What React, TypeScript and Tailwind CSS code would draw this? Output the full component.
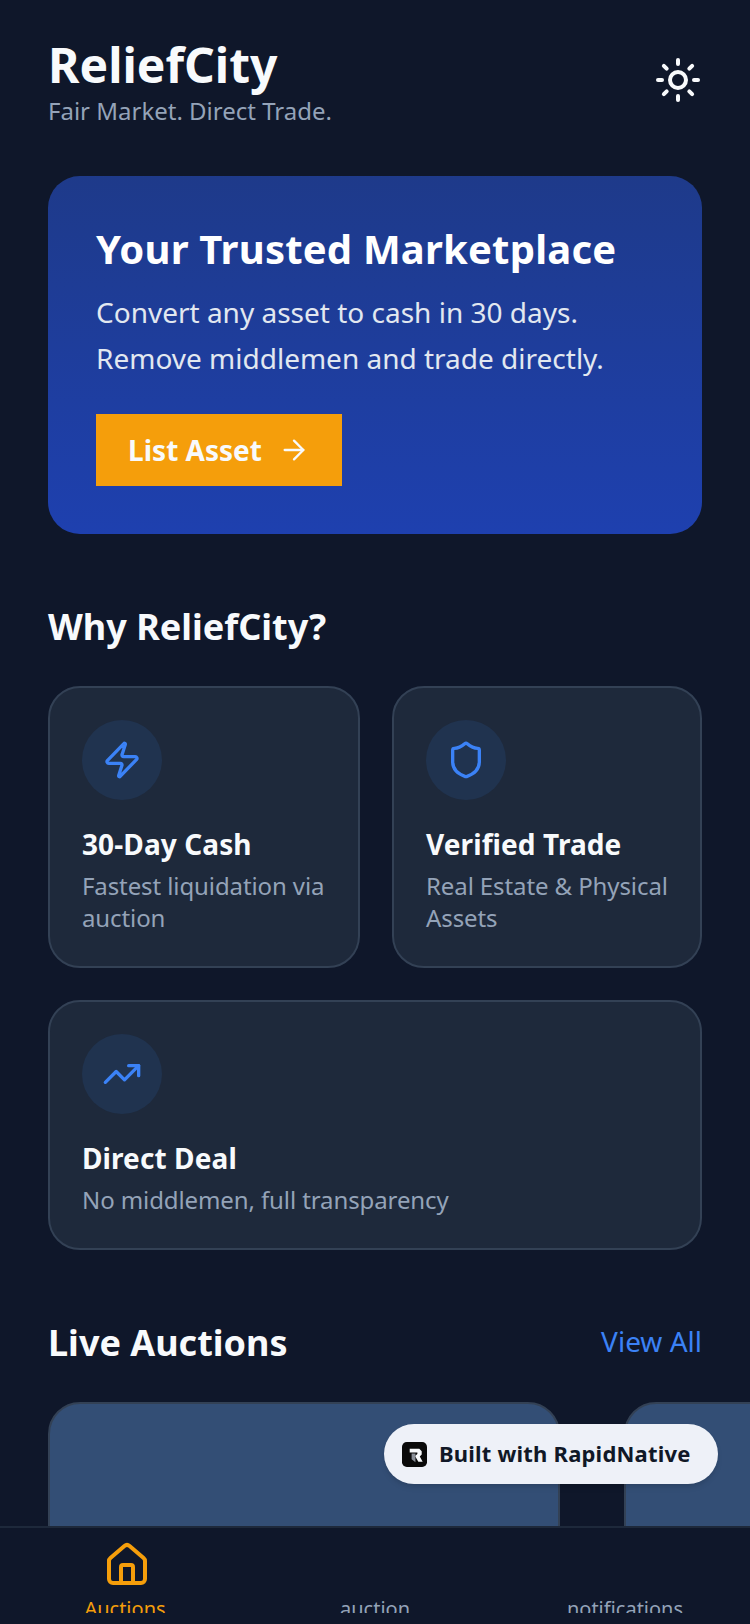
import { ArrowRight, Home, Shield, Sun, TrendingUp, Zap } from 'lucide-react';
import type { ReactNode } from 'react';

function FeatureCard({ icon, title, text, width }: { icon: ReactNode; title: string; text: string; width: string }) {
  return (
    <div className={`rounded-[32px] border-2 border-[#334155] bg-[#1e293b] py-8 pr-6 pl-8 ${width}`}>
      <div className="mb-[25px] flex h-20 w-20 items-center justify-center rounded-full bg-[#20334f]">{icon}</div>
      <h3 className="text-[28px] leading-[38px] font-bold tracking-[0.1px] text-[#f8fafc]">{title}</h3>
      <p className="mt-[7px] text-2xl leading-8 tracking-[-0.1px] text-[#94a3b8]">{text}</p>
    </div>
  );
}

function Tab({ label, active }: { label: string; active?: boolean }) {
  return (
    <div className="flex flex-1 flex-col items-center pt-[13px]">
      <div className="h-12 w-12">{active && <Home size={48} strokeWidth={2} className="ml-0.5 text-[#f59e0b]" />}</div>
      <div className="mt-[5px] h-[19px] overflow-hidden">
        <span className={`block text-xl leading-[30px] ${active ? 'text-[#f59e0b]' : 'text-[#94a3b8]'}`}>{label}</span>
      </div>
    </div>
  );
}

export default function App() {
  return (
    <div className="relative flex h-[1624px] w-[750px] flex-col overflow-hidden bg-[#0f172a] font-['Noto_Sans',sans-serif]">
      <main className="flex-1 overflow-hidden px-12 pt-[41px]">
        {/* Header */}
        <header className="flex items-start justify-between">
          <div>
            <h1 className="text-[48px] leading-[48px] font-bold text-[#f8fafc]">ReliefCity</h1>
            <p className="mt-[6px] text-2xl leading-8 text-[#94a3b8]">Fair Market. Direct Trade.</p>
          </div>
          <Sun size={48} className="mt-[15px] text-[#f8fafc]" />
        </header>

        {/* Hero */}
        <section className="mt-[49px] rounded-[32px] bg-gradient-to-b from-[#1e3a8a] to-[#1e40af] p-12">
          <h2 className="text-[40px] leading-[50px] font-bold tracking-[0.2px] text-white">Your Trusted Marketplace</h2>
          <p className="mt-[15px] text-[28px] leading-[46px] text-[#e2e8f0]">
            Convert any asset to cash in 30 days.
            <br />
            Remove middlemen and trade directly.
          </p>
          <button className="mt-[33px] flex h-[72px] w-[246px] items-center justify-center gap-4 bg-[#f59e0b] text-[28px] font-bold text-[#f8fafc]">
            List Asset
            <ArrowRight size={32} strokeWidth={1.75} />
          </button>
        </section>

        {/* Why */}
        <h2 className="mt-[68px] text-4xl leading-[50px] font-bold text-[#f8fafc]">Why ReliefCity?</h2>
        <div className="mt-[34px] flex flex-wrap gap-8">
          <FeatureCard width="w-[312px]" icon={<Zap size={40} className="text-[#3b82f6]" />} title="30-Day Cash" text="Fastest liquidation via auction" />
          <FeatureCard width="w-[310px]" icon={<Shield size={40} className="text-[#3b82f6]" />} title="Verified Trade" text="Real Estate & Physical Assets" />
          <FeatureCard width="w-full" icon={<TrendingUp size={40} className="text-[#3b82f6]" />} title="Direct Deal" text="No middlemen, full transparency" />
        </div>

        {/* Live Auctions */}
        <div className="mt-[68px] flex items-center justify-between">
          <h2 className="text-4xl leading-[50px] font-bold text-[#f8fafc]">Live Auctions</h2>
          <span className="mb-1 text-[28px] text-[#3b82f6]">View All</span>
        </div>
        <div className="mt-[34px] flex w-[900px] gap-16">
          <div className="h-[300px] w-[512px] shrink-0 rounded-t-[32px] border-2 border-[#334155] bg-[#334e75]" />
          <div className="h-[300px] w-[512px] shrink-0 rounded-t-[32px] border-2 border-[#334155] bg-[#334e75]" />
        </div>
      </main>

      {/* Tab bar */}
      <nav className="z-10 flex h-[98px] shrink-0 border-t-2 border-[#1e293b] bg-[#0f172a]">
        <Tab active label="Auctions" />
        <Tab label="auction" />
        <Tab label="notifications" />
      </nav>

      {/* Badge */}
      <div className="absolute top-[1424px] left-[384px] z-20 flex h-[60px] w-[334px] items-center gap-3 rounded-full bg-[#eef1f8] pl-[18px] shadow-md">
        <svg width="25" height="25" viewBox="0 0 26 26">
          <rect width="26" height="26" rx="5" fill="#0a0a0a" />
          <path d="M8 7h10l2.5 2.5v3.5l-2 2 3 5.5h-4.5l-3.5-6 2.5-2v-1.5H8z" fill="#f8fafc" />
          <path d="M10 12h4v9l-4-3z" fill="#8a8f98" />
        </svg>
        <span className="-mt-0.5 text-[22px] font-bold tracking-[0.2px] text-[#111827]">Built with RapidNative</span>
      </div>
    </div>
  );
}
